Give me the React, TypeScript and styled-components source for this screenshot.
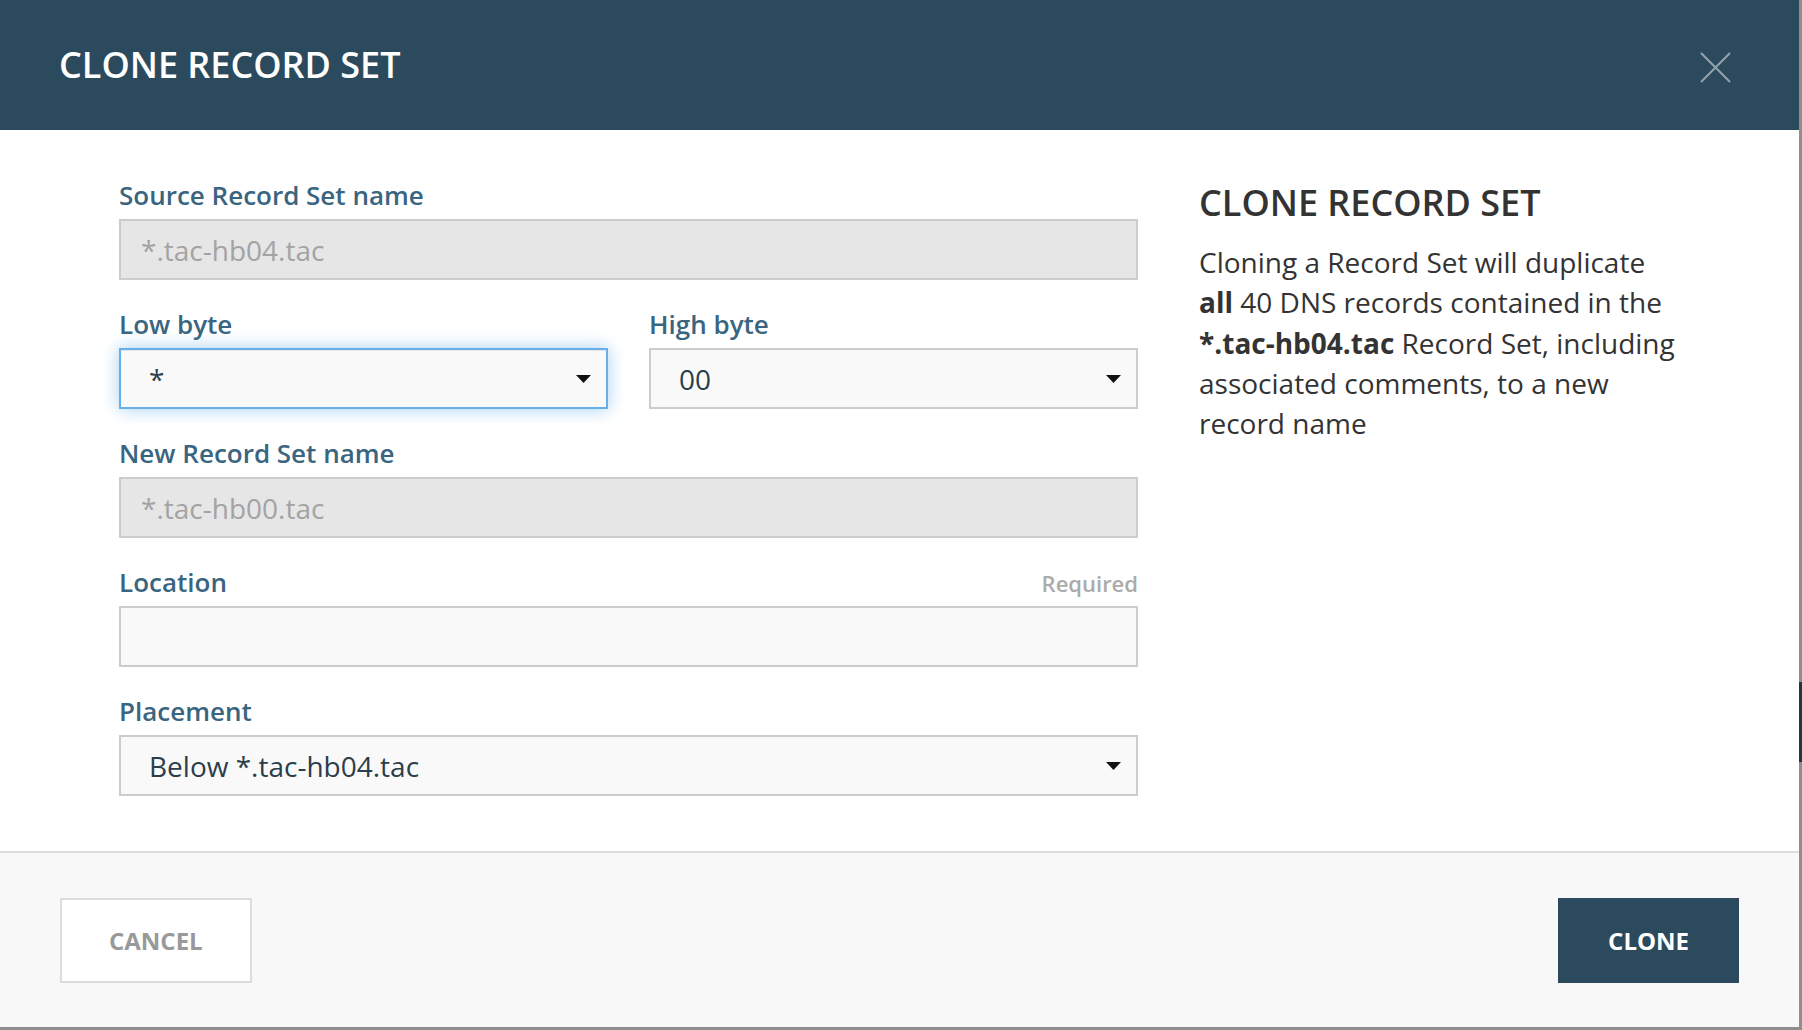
import { memo } from 'react'
import styled, { createGlobalStyle } from 'styled-components'

const GlobalStyle = createGlobalStyle`
  html, body {
    margin: 0;
    padding: 0;
    background: #8e8e8e;
    overflow: hidden;
  }
  * {
    box-sizing: border-box;
  }
`

const StyledPage = styled.div`
  display: flex;
  width: 1802px;
  height: 1030px;
  font-family: 'Open Sans', 'Liberation Sans', sans-serif;
`

const StyledModal = styled.div`
  display: flex;
  flex-direction: column;
  width: 1799px;
  height: 1027px;
  background: #fff;
`

const StyledScrollStrip = styled.div`
  flex: 1 1 auto;
  padding-top: 682px;
`

const StyledScrollThumb = styled.div`
  height: 80px;
  background: #24353f;
`

const StyledHeader = styled.div`
  display: flex;
  align-items: center;
  justify-content: space-between;
  height: 130px;
  padding: 0 68px 0 59px;
  background: #2c4a5d;
`

const StyledTitle = styled.h1`
  margin: 0;
  font-size: 36px;
  font-weight: 600;
  line-height: 40px;
  color: #fff;
`

const StyledCloseButton = styled.button`
  display: flex;
  padding: 0;
  margin-top: 4px;
  border: 0;
  background: none;
  cursor: pointer;
`

const StyledBody = styled.div`
  flex: 1 1 auto;
  display: grid;
  grid-template-columns: 1019px 480px;
  column-gap: 61px;
  padding: 47px 120px 0 119px;
`

const StyledForm = styled.div`
  display: flex;
  flex-direction: column;
`

const StyledGroup = styled.div`
  display: flex;
  flex-direction: column;
  margin-bottom: 26px;
`

const StyledRow = styled.div`
  display: grid;
  grid-template-columns: 1fr 1fr;
  column-gap: 41px;
`

const StyledLabelRow = styled.div`
  display: flex;
  align-items: baseline;
  justify-content: space-between;
  margin-bottom: 6px;
`

const StyledLabel = styled.label`
  font-size: 26px;
  font-weight: 600;
  line-height: 36px;
  color: #3a6580;
`

const StyledHint = styled.span`
  font-size: 22px;
  font-weight: 600;
  color: #ababab;
`

const StyledInput = styled.div<{ $disabled?: boolean }>`
  display: flex;
  align-items: center;
  height: 61px;
  padding: 0 20px;
  border: 2px solid #cccccc;
  background: ${({ $disabled }) => ($disabled ? '#e6e6e6' : '#f9f9f9')};
  font-size: 28px;
  color: #a3a3a3;
`

const StyledSelect = styled.div<{ $focused?: boolean }>`
  display: flex;
  align-items: center;
  justify-content: space-between;
  height: 61px;
  padding: 0 15px 0 28px;
  border: 2px solid ${({ $focused }) => ($focused ? '#66afe9' : '#cccccc')};
  background: #f9f9f9;
  box-shadow: ${({ $focused }) =>
    $focused
      ? 'inset 0 1px 1px rgba(0,0,0,0.075), 0 0 16px rgba(102,175,233,0.6)'
      : 'none'};
  font-size: 28px;
  color: #2b3e4b;
`

const StyledCaret = styled.svg`
  flex: 0 0 auto;
  margin-top: 1px;
`

const StyledAside = styled.div`
  display: flex;
  flex-direction: column;
  color: #333;
`

const StyledAsideTitle = styled.h2`
  margin: 6px 0 19px;
  font-size: 36px;
  font-weight: 600;
  line-height: 40px;
`

const StyledAsideText = styled.p`
  margin: 0;
  font-size: 28px;
  line-height: 40.25px;

  b {
    font-weight: 700;
  }
`

const StyledFooter = styled.div`
  display: flex;
  align-items: center;
  justify-content: space-between;
  height: 176px;
  padding: 0 60px;
  border-top: 2px solid #dddddd;
  background: #f8f8f8;
`

const StyledButton = styled.button<{ $primary?: boolean }>`
  height: 85px;
  padding: 0 ${({ $primary }) => ($primary ? '48px' : '47px')};
  border: 2px solid ${({ $primary }) => ($primary ? '#2c4a5d' : '#dddddd')};
  background: ${({ $primary }) => ($primary ? '#2c4a5d' : '#fff')};
  font-family: 'Open Sans', 'Liberation Sans', sans-serif;
  font-size: 24px;
  font-weight: 700;
  color: ${({ $primary }) => ($primary ? '#fff' : '#999')};
  cursor: pointer;
`

const Caret = () => (
  <StyledCaret width="15" height="8" viewBox="0 0 15 8">
    <polygon points="0,0 15,0 7.5,8" fill="#111" />
  </StyledCaret>
)

const CloneRecordSet = memo(() => (
  <StyledPage>
    <GlobalStyle />
    <StyledModal>
      <StyledHeader>
        <StyledTitle>CLONE RECORD SET</StyledTitle>
        <StyledCloseButton aria-label="Close">
          <svg width="31" height="31" viewBox="0 0 31 31">
            <path
              d="M1 1 L30 30 M30 1 L1 30"
              stroke="#93a4ae"
              strokeWidth="2"
              fill="none"
            />
          </svg>
        </StyledCloseButton>
      </StyledHeader>

      <StyledBody>
        <StyledForm>
          <StyledGroup>
            <StyledLabelRow>
              <StyledLabel>Source Record Set name</StyledLabel>
            </StyledLabelRow>
            <StyledInput $disabled>*.tac-hb04.tac</StyledInput>
          </StyledGroup>

          <StyledRow>
            <StyledGroup>
              <StyledLabelRow>
                <StyledLabel>Low byte</StyledLabel>
              </StyledLabelRow>
              <StyledSelect $focused>
                <span>*</span>
                <Caret />
              </StyledSelect>
            </StyledGroup>
            <StyledGroup>
              <StyledLabelRow>
                <StyledLabel>High byte</StyledLabel>
              </StyledLabelRow>
              <StyledSelect>
                <span>00</span>
                <Caret />
              </StyledSelect>
            </StyledGroup>
          </StyledRow>

          <StyledGroup>
            <StyledLabelRow>
              <StyledLabel>New Record Set name</StyledLabel>
            </StyledLabelRow>
            <StyledInput $disabled>*.tac-hb00.tac</StyledInput>
          </StyledGroup>

          <StyledGroup>
            <StyledLabelRow>
              <StyledLabel>Location</StyledLabel>
              <StyledHint>Required</StyledHint>
            </StyledLabelRow>
            <StyledInput />
          </StyledGroup>

          <StyledGroup>
            <StyledLabelRow>
              <StyledLabel>Placement</StyledLabel>
            </StyledLabelRow>
            <StyledSelect>
              <span>Below *.tac-hb04.tac</span>
              <Caret />
            </StyledSelect>
          </StyledGroup>
        </StyledForm>

        <StyledAside>
          <StyledAsideTitle>CLONE RECORD SET</StyledAsideTitle>
          <StyledAsideText>
            Cloning a Record Set will duplicate <b>all</b> 40 DNS records
            contained in the <b>*.tac-hb04.tac</b> Record Set, including
            associated comments, to a new record name
          </StyledAsideText>
        </StyledAside>
      </StyledBody>

      <StyledFooter>
        <StyledButton>CANCEL</StyledButton>
        <StyledButton $primary>CLONE</StyledButton>
      </StyledFooter>
    </StyledModal>
    <StyledScrollStrip>
      <StyledScrollThumb />
    </StyledScrollStrip>
  </StyledPage>
))

export default CloneRecordSet
